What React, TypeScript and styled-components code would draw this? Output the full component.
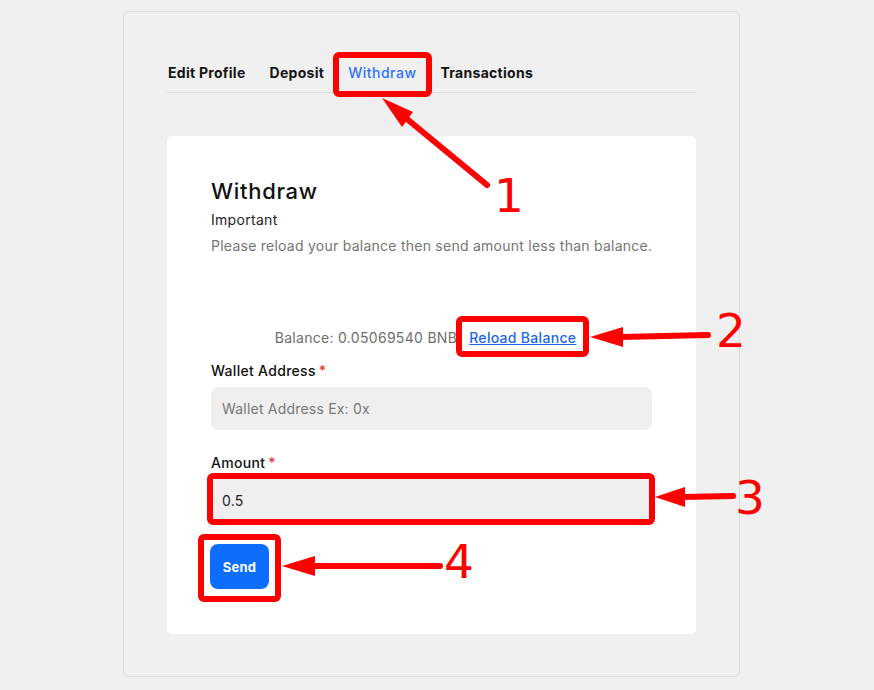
import React from "react";
import styled, { createGlobalStyle } from "styled-components";

const GlobalStyle = createGlobalStyle`
  html, body { margin: 0; padding: 0; background: #f0f0f0; }
  body { font-family: Inter, "Open Sans", Arial, sans-serif; color: #1c1c1c; letter-spacing: 0.3px; }
  * { box-sizing: border-box; }
`;

const Page = styled.div`
  position: relative;
  width: 874px;
  height: 690px;
  overflow: hidden;
  padding-top: 11px;
`;

const Shell = styled.div`
  margin-left: 123px;
  width: 617px;
  height: 666px;
  border: 1px solid #dcdcdc;
  border-radius: 6px;
  padding: 51px 43px 42px;
`;

const TabBar = styled.nav`
  display: flex;
  gap: 24px;
  padding: 0 1px 9px;
  border-bottom: 1px solid #dcdcdc;
`;

const Tab = styled.a<{ $active?: boolean }>`
  font-size: 14px;
  line-height: 20px;
  font-weight: ${(p) => (p.$active ? 500 : 700)};
  letter-spacing: ${(p) => (p.$active ? "0.5px" : "0.28px")};
  color: ${(p) => (p.$active ? "#2f72ff" : "#151515")};
  text-decoration: none;
`;

const Panel = styled.section`
  margin-top: 43px;
  background: #ffffff;
  border-radius: 5px;
  padding: 41px 44px 45px;
  display: flex;
  flex-direction: column;
`;

const Title = styled.h2`
  margin: 0;
  font-size: 22px;
  line-height: 28px;
  font-weight: 500;
  letter-spacing: 0.7px;
  color: #111;
`;

const Subtitle = styled.div`
  margin-top: 5px;
  font-size: 14px;
  line-height: 20px;
  color: #1e1e1e;
`;

const Note = styled.p`
  margin: 6px 0 0;
  font-size: 14px;
  line-height: 20px;
  letter-spacing: 0.25px;
  white-space: nowrap;
  color: #757575;
`;

const BalanceRow = styled.div`
  margin-top: 72px;
  display: flex;
  justify-content: center;
  gap: 12px;
  padding-right: 12px;
  font-size: 14px;
  line-height: 20px;
  white-space: nowrap;
`;

const BalanceText = styled.span`
  color: #6e6e6e;
`;

const ReloadLink = styled.a`
  color: #1c66e8;
  text-decoration: underline;
  font-weight: 500;
`;

const Field = styled.div<{ $gap: number }>`
  margin-top: ${(p) => p.$gap}px;
  display: flex;
  flex-direction: column;
  gap: 6px;
`;

const Label = styled.label`
  font-size: 14px;
  line-height: 20px;
  font-weight: 500;
  color: #111;
`;

const Req = styled.span`
  color: #e03a3a;
  margin-left: 3px;
`;

const Input = styled.input`
  height: 43px;
  width: 100%;
  border: none;
  border-radius: 7px;
  background: #efefef;
  padding: 0 11px;
  font-family: inherit;
  font-size: 14px;
  letter-spacing: 0.2px;
  color: #222;
  outline: none;
  &::placeholder { color: #777; }
`;

const SendButton = styled.button`
  margin-top: 22px;
  align-self: flex-start;
  margin-left: -1px;
  width: 59px;
  height: 45px;
  border: none;
  border-radius: 8px;
  background: #0d6efd;
  color: #fff;
  font-family: inherit;
  font-size: 13px;
  font-weight: 700;
  letter-spacing: 0.3px;
`;

const Overlay = styled.svg`
  position: absolute;
  left: 0;
  top: 0;
  pointer-events: none;
`;

const Num = styled.span`
  position: absolute;
  font-family: "DejaVu Sans", sans-serif;
  font-size: 47px;
  line-height: 1;
  letter-spacing: 0;
  color: #ff0000;
`;

const RED = "#ff0000";

const boxes = [
  { x: 336, y: 55, w: 93, h: 39 },
  { x: 459, y: 319, w: 127, h: 35 },
  { x: 210, y: 476, w: 442, h: 46 },
  { x: 201, y: 537, w: 77, h: 62 },
];

const arrows = [
  { head: "382,98 413,112 402,127", line: [407, 119, 487, 185] },
  { head: "590,337 623,327 623,347", line: [620, 337, 708, 335] },
  { head: "655,497 685,487 685,507", line: [682, 497, 733, 496] },
  { head: "282,566 315,556 315,576", line: [312, 566, 440, 566] },
];

const nums = [
  { n: "1", x: 494, y: 172 },
  { n: "2", x: 716, y: 307 },
  { n: "3", x: 735, y: 474 },
  { n: "4", x: 444, y: 538 },
];

export default function App() {
  return (
    <Page>
      <GlobalStyle />
      <Shell>
        <TabBar>
          <Tab>Edit Profile</Tab>
          <Tab>Deposit</Tab>
          <Tab $active>Withdraw</Tab>
          <Tab>Transactions</Tab>
        </TabBar>
        <Panel>
          <Title>Withdraw</Title>
          <Subtitle>Important</Subtitle>
          <Note>Please reload your balance then send amount less than balance.</Note>
          <BalanceRow>
            <BalanceText>Balance: 0.05069540 BNB</BalanceText>
            <ReloadLink>Reload Balance</ReloadLink>
          </BalanceRow>
          <Field $gap={13}>
            <Label>
              Wallet Address<Req>*</Req>
            </Label>
            <Input placeholder="Wallet Address Ex: 0x" />
          </Field>
          <Field $gap={23}>
            <Label>
              Amount<Req>*</Req>
            </Label>
            <Input defaultValue="0.5" />
          </Field>
          <SendButton>Send</SendButton>
        </Panel>
      </Shell>
      <Overlay width={874} height={690} viewBox="0 0 874 690">
        {boxes.map((b, i) => (
          <rect key={i} x={b.x} y={b.y} width={b.w} height={b.h} rx={3} fill="none" stroke={RED} strokeWidth={6} />
        ))}
        {arrows.map((a, i) => (
          <g key={i}>
            <line x1={a.line[0]} y1={a.line[1]} x2={a.line[2]} y2={a.line[3]} stroke={RED} strokeWidth={6} strokeLinecap="round" />
            <polygon points={a.head} fill={RED} />
          </g>
        ))}
      </Overlay>
      {nums.map((m) => (
        <Num key={m.n} style={{ left: m.x, top: m.y }}>
          {m.n}
        </Num>
      ))}
    </Page>
  );
}
